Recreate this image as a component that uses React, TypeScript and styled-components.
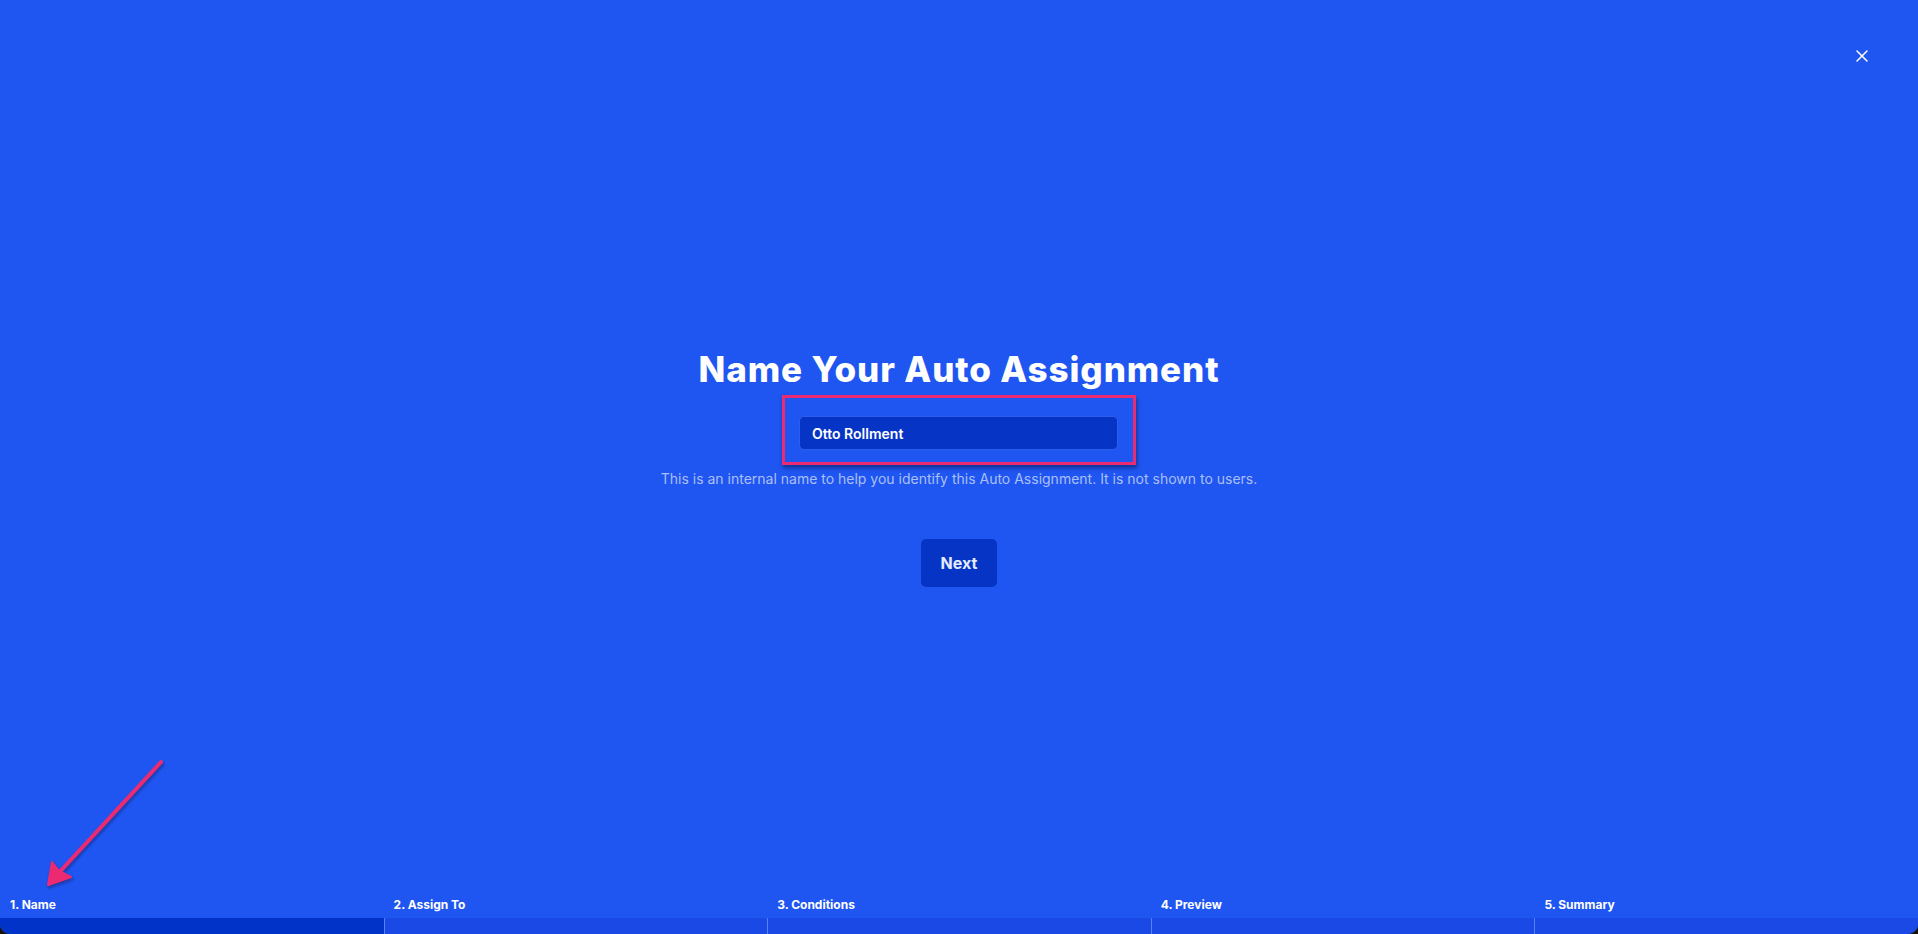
import React from "react";
import styled, { createGlobalStyle } from "styled-components";

const GlobalStyle = createGlobalStyle`
  html, body {
    margin: 0;
    padding: 0;
    height: 100%;
    background: #1b1208;
  }
  #root {
    height: 100%;
  }
  * { box-sizing: border-box; }
`;

const Modal = styled.div`
  position: relative;
  height: 934px;
  width: 100%;
  background: #1f56f1;
  border-radius: 0 0 10px 10px;
  overflow: hidden;
  display: flex;
  flex-direction: column;
  font-family: Inter, "Liberation Sans", sans-serif;
  color: #fff;
`;

const TopBar = styled.div`
  display: flex;
  justify-content: flex-end;
  padding: 48px 48px 0 0;
  height: 64px;
`;

const CloseButton = styled.button`
  width: 16px;
  height: 16px;
  padding: 0;
  border: none;
  background: transparent;
  display: flex;
  align-items: center;
  justify-content: center;
  cursor: pointer;
`;

const Main = styled.main`
  flex: 1;
  display: flex;
  flex-direction: column;
  align-items: center;
  padding-top: 282px;
`;

const Title = styled.h1`
  margin: 0;
  font-family: Inter, "Liberation Sans", sans-serif;
  font-weight: 800;
  font-size: 35px;
  line-height: 46px;
  letter-spacing: 0.9px;
  color: #ffffff;
`;

const Highlight = styled.div`
  margin-top: 3px;
  border: 3px solid #ec2a72;
  padding: 18px 15px 12px 14px;
  box-shadow: 1px 3px 4px rgba(10, 20, 70, 0.55);
`;

const NameInput = styled.input`
  display: block;
  width: 319px;
  height: 34px;
  padding: 0 12px;
  border-radius: 5px;
  border: 1px solid #2c5ded;
  background: #0635c6;
  color: #ffffff;
  font-family: Inter, "Liberation Sans", sans-serif;
  font-weight: 600;
  font-size: 14px;
  outline: none;
`;

const Helper = styled.p`
  margin: 5px 0 0;
  font-size: 14px;
  line-height: 18px;
  color: #aabff6;
`;

const NextButton = styled.button`
  margin-top: 51px;
  width: 76px;
  height: 48px;
  border: none;
  border-radius: 5px;
  background: #0635c6;
  color: #e4ebff;
  font-family: Inter, "Liberation Sans", sans-serif;
  font-weight: 700;
  font-size: 16px;
  cursor: pointer;
`;

const Steps = styled.nav`
  display: grid;
  grid-template-columns: repeat(5, 1fr);
`;

const Step = styled.div`
  display: flex;
  flex-direction: column;
`;

const StepLabel = styled.span`
  padding: 0 10px;
  height: 28px;
  display: flex;
  align-items: center;
  font-size: 12px;
  font-weight: 700;
  color: #ffffff;
`;

const StepBar = styled.div<{ $active?: boolean; $first?: boolean }>`
  height: 16px;
  background: ${(p) => (p.$active ? "#0233c8" : "#1a49e6")};
  border-left: ${(p) => (p.$first ? "none" : "1px solid #5a80f3")};
`;

const ArrowLayer = styled.svg`
  position: absolute;
  left: 30px;
  top: 750px;
  pointer-events: none;
  overflow: visible;
`;

const steps = ["1. Name", "2. Assign To", "3. Conditions", "4. Preview", "5. Summary"];

export default function App() {
  return (
    <>
      <GlobalStyle />
      <Modal>
        <TopBar>
          <CloseButton aria-label="Close">
            <svg width="12" height="12" viewBox="0 0 12 12">
              <path d="M1 1 L11 11 M11 1 L1 11" stroke="#fff" strokeWidth="1.5" strokeLinecap="round" />
            </svg>
          </CloseButton>
        </TopBar>
        <Main>
          <Title>Name Your Auto Assignment</Title>
          <Highlight>
            <NameInput defaultValue="Otto Rollment" />
          </Highlight>
          <Helper>
            This is an internal name to help you identify this Auto Assignment. It is not shown to users.
          </Helper>
          <NextButton>Next</NextButton>
        </Main>
        <Steps>
          {steps.map((s, i) => (
            <Step key={s}>
              <StepLabel>{s}</StepLabel>
              <StepBar $active={i === 0} $first={i === 0} />
            </Step>
          ))}
        </Steps>
        <ArrowLayer width="150" height="150">
          <defs>
            <filter id="sh" x="-20%" y="-20%" width="140%" height="140%">
              <feDropShadow dx="1" dy="2" stdDeviation="1.5" floodColor="#0a1440" floodOpacity="0.5" />
            </filter>
          </defs>
          <g filter="url(#sh)">
            <path d="M131 12 L24 128" stroke="#ec2a72" strokeWidth="4" strokeLinecap="round" fill="none" />
            <path d="M18 135 L22 112 L29 121 L41 127 Z" fill="#ec2a72" stroke="#ec2a72" strokeWidth="2" strokeLinejoin="round" />
          </g>
        </ArrowLayer>
      </Modal>
    </>
  );
}
